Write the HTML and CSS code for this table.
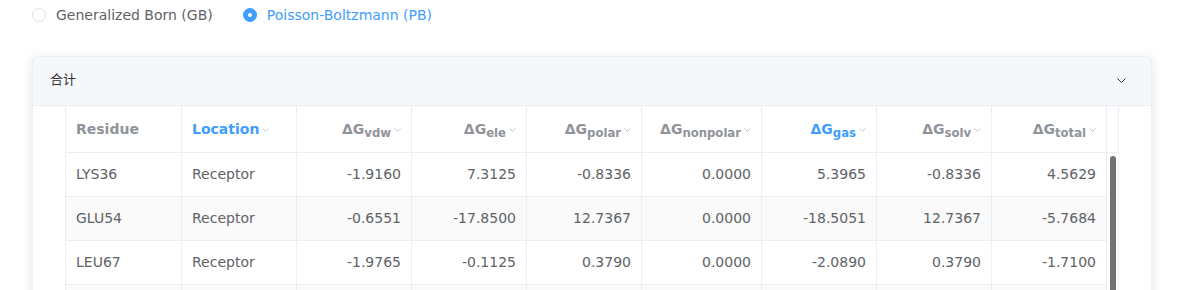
FILE: index.html
```html
<!DOCTYPE html>
<html lang="zh">
<head>
<meta charset="utf-8">
<title>MM/PBSA</title>
<link rel="stylesheet" href="styles.css">
</head>
<body>
<div class="page">
  <div class="radio-group">
    <label class="radio"><span class="radio-dot"></span><span class="radio-label">Generalized Born (GB)</span></label>
    <label class="radio is-checked"><span class="radio-dot"></span><span class="radio-label">Poisson-Boltzmann (PB)</span></label>
  </div>

  <div class="panel">
    <div class="panel-head">
      <span class="panel-title">合计</span>
      <svg class="panel-arrow" width="9" height="5" viewBox="0 0 9 5"><path d="M0.5 0.5 L4.5 4.5 L8.5 0.5" fill="none" stroke="#303133" stroke-width="1"/></svg>
    </div>
    <div class="panel-body">
      <div class="tbl">
        <div class="row head">
          <div class="cell"><span class="label">Residue</span></div>
          <div class="cell active"><span class="label">Location</span><svg class="caret" width="7" height="4" viewBox="0 0 7 4"><path d="M0.5 0.5 L3.5 3.5 L6.5 0.5" fill="none" stroke="#c0c4cc"/></svg></div>
          <div class="cell num"><span class="label">ΔG<sub>vdw</sub></span><svg class="caret" width="7" height="4" viewBox="0 0 7 4"><path d="M0.5 0.5 L3.5 3.5 L6.5 0.5" fill="none" stroke="#c0c4cc"/></svg></div>
          <div class="cell num"><span class="label">ΔG<sub>ele</sub></span><svg class="caret" width="7" height="4" viewBox="0 0 7 4"><path d="M0.5 0.5 L3.5 3.5 L6.5 0.5" fill="none" stroke="#c0c4cc"/></svg></div>
          <div class="cell num"><span class="label">ΔG<sub>polar</sub></span><svg class="caret" width="7" height="4" viewBox="0 0 7 4"><path d="M0.5 0.5 L3.5 3.5 L6.5 0.5" fill="none" stroke="#c0c4cc"/></svg></div>
          <div class="cell num"><span class="label">ΔG<sub>nonpolar</sub></span><svg class="caret" width="7" height="4" viewBox="0 0 7 4"><path d="M0.5 0.5 L3.5 3.5 L6.5 0.5" fill="none" stroke="#c0c4cc"/></svg></div>
          <div class="cell num active"><span class="label">ΔG<sub>gas</sub></span><svg class="caret" width="7" height="4" viewBox="0 0 7 4"><path d="M0.5 0.5 L3.5 3.5 L6.5 0.5" fill="none" stroke="#c0c4cc"/></svg></div>
          <div class="cell num"><span class="label">ΔG<sub>solv</sub></span><svg class="caret" width="7" height="4" viewBox="0 0 7 4"><path d="M0.5 0.5 L3.5 3.5 L6.5 0.5" fill="none" stroke="#c0c4cc"/></svg></div>
          <div class="cell num"><span class="label">ΔG<sub>total</sub></span><svg class="caret" width="7" height="4" viewBox="0 0 7 4"><path d="M0.5 0.5 L3.5 3.5 L6.5 0.5" fill="none" stroke="#c0c4cc"/></svg></div>
          <div class="cell gutter-head"></div>
        </div>
        <div class="body">
          <div class="rows">
            <div class="row">
              <div class="cell">LYS36</div><div class="cell">Receptor</div>
              <div class="cell num">-1.9160</div><div class="cell num">7.3125</div>
              <div class="cell num">-0.8336</div><div class="cell num">0.0000</div>
              <div class="cell num">5.3965</div><div class="cell num">-0.8336</div>
              <div class="cell num">4.5629</div>
            </div>
            <div class="row striped">
              <div class="cell">GLU54</div><div class="cell">Receptor</div>
              <div class="cell num">-0.6551</div><div class="cell num">-17.8500</div>
              <div class="cell num">12.7367</div><div class="cell num">0.0000</div>
              <div class="cell num">-18.5051</div><div class="cell num">12.7367</div>
              <div class="cell num">-5.7684</div>
            </div>
            <div class="row">
              <div class="cell">LEU67</div><div class="cell">Receptor</div>
              <div class="cell num">-1.9765</div><div class="cell num">-0.1125</div>
              <div class="cell num">0.3790</div><div class="cell num">0.0000</div>
              <div class="cell num">-2.0890</div><div class="cell num">0.3790</div>
              <div class="cell num">-1.7100</div>
            </div>
            <div class="row striped">
              <div class="cell"></div><div class="cell"></div>
              <div class="cell num"></div><div class="cell num"></div>
              <div class="cell num"></div><div class="cell num"></div>
              <div class="cell num"></div><div class="cell num"></div>
              <div class="cell num"></div>
            </div>
          </div>
          <div class="gutter"><div class="thumb"></div></div>
        </div>
      </div>
    </div>
  </div>
</div>
</body>
</html>
```

FILE: styles.css
```css
html, body {
  margin: 0;
  padding: 0;
  background: #ffffff;
}

body {
  font-family: "DejaVu Sans", "Noto Sans CJK SC", sans-serif;
  font-size: 14px;
  color: #606266;
}

.page {
  padding: 0 32px;
}

.radio-group {
  height: 30px;
  display: flex;
  align-items: center;
}

.radio {
  display: flex;
  align-items: center;
  margin-right: 30px;
  cursor: pointer;
}

.radio-dot {
  box-sizing: border-box;
  width: 14px;
  height: 14px;
  border: 1px solid #dcdfe6;
  border-radius: 50%;
  background: #fff;
  position: relative;
  flex: none;
}

.radio.is-checked .radio-dot {
  border-color: #409eff;
  background: #409eff;
}

.radio.is-checked .radio-dot::after {
  content: "";
  position: absolute;
  left: 50%;
  top: 50%;
  width: 4px;
  height: 4px;
  margin: -2px 0 0 -2px;
  border-radius: 50%;
  background: #fff;
}

.radio-label {
  padding-left: 10px;
  font-size: 14px;
  color: #606266;
  line-height: 1;
}

.radio.is-checked .radio-label {
  color: #409eff;
}

.panel {
  margin-top: 26px;
  width: 1120px;
  box-sizing: border-box;
  border: 1px solid #ebeef5;
  border-radius: 4px;
  box-shadow: 0 2px 12px 0 rgba(0, 0, 0, 0.1);
  background: #fff;
  overflow: hidden;
}

.panel-head {
  height: 45px;
  padding: 0 25px 3px 17px;
  border-bottom: 1px solid #ebeef5;
  background: #f5f7fa;
  display: flex;
  align-items: center;
  justify-content: space-between;
}

.panel-title {
  font-family: "DejaVu Sans", "Noto Sans CJK SC", sans-serif;
  font-size: 13px;
  line-height: 16px;
  color: #303133;
}

.panel-arrow {
  display: block;
  margin-top: 2px;
}

.panel-body {
  padding: 0 32px;
}

.tbl {
  border-left: 1px solid #ebeef5;
}

.row {
  display: grid;
  grid-template-columns: 116px 115px 115px 115px 115px 120px 115px 115px 115px;
}

.row.head {
  grid-template-columns: 116px 115px 115px 115px 115px 120px 115px 115px 115px 12px;
}

.cell {
  box-sizing: border-box;
  height: 44px;
  padding: 0 10px 1px;
  border-right: 1px solid #ebeef5;
  border-bottom: 1px solid #ebeef5;
  display: flex;
  align-items: center;
  white-space: nowrap;
  overflow: hidden;
}

.cell.num {
  justify-content: flex-end;
}

.row.striped .cell {
  background: #fafafa;
}

.row.head .cell {
  height: 47px;
  padding: 0 10px;
  font-weight: bold;
  color: #909399;
}

.row.head .cell.active {
  color: #409eff;
}

.label {
  display: block;
  line-height: 20px;
}

.label sub {
  font-size: smaller;
  vertical-align: -3px;
  line-height: 0;
}

.row.head .gutter-head {
  padding: 0;
}

.caret {
  display: block;
  flex: none;
  margin-left: 3px;
  margin-top: 2px;
}

.body {
  display: flex;
}

.rows {
  flex: none;
}

.gutter {
  box-sizing: border-box;
  width: 12px;
  border-right: 1px solid #ebeef5;
  padding: 3px 0 0 3px;
}

.thumb {
  width: 6px;
  height: 200px;
  border-radius: 3px;
  background: #727272;
}
```
